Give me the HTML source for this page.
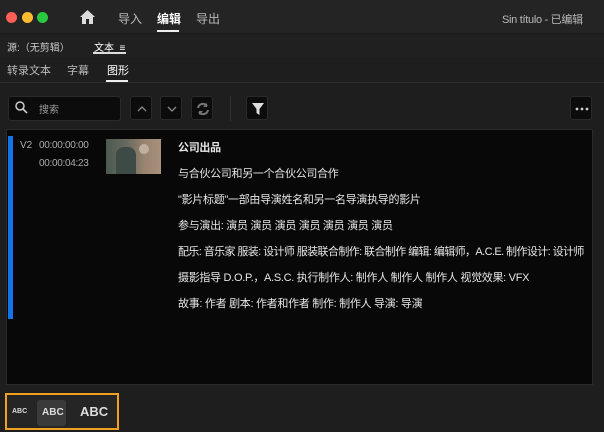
<!DOCTYPE html>
<html><head><meta charset="utf-8"><style>
*{margin:0;padding:0;box-sizing:border-box}
body{width:604px;height:432px;background:#1e1e1e;font-family:"Liberation Sans","Noto Sans CJK SC",sans-serif;color:#ccc;position:relative;overflow:hidden;font-size:11px}
.a{position:absolute}
.dot{width:11px;height:11px;border-radius:50%;top:12px}
.btn{background:#0c0c0c;border:1px solid #2a2a2a;border-radius:3px;width:22px;height:24px;top:96px}
.row{left:178px;color:#e6e6e6;font-size:11px;white-space:nowrap;letter-spacing:-0.3px}
</style></head><body>
<div class="a" style="left:0;top:0;width:604px;height:34px;background:#242424;border-bottom:1px solid #1a1a1a"></div>
<div class="a dot" style="left:6px;background:#fe5f57"></div>
<div class="a dot" style="left:22px;background:#febc2e"></div>
<div class="a dot" style="left:37px;background:#28c840"></div>
<svg class="a" style="left:80px;top:10px" width="15" height="14" viewBox="0 0 15 14"><path d="M7.5 0L0 7h2v7h4V9h3v5h4V7h2z" fill="#ddd"/></svg>
<div class="a" style="left:118px;top:10px;font-size:12px;color:#bbb">导入</div>
<div class="a" style="left:157px;top:10px;font-size:12px;color:#fff;font-weight:bold">编辑</div>
<div class="a" style="left:157px;top:30px;width:22px;height:2px;background:#eee"></div>
<div class="a" style="left:196px;top:10px;font-size:12px;color:#bbb">导出</div>
<div class="a" style="left:502px;top:11px;font-size:11px;color:#bbb;letter-spacing:-0.3px">Sin título - 已编辑</div>
<div class="a" style="left:0;top:35px;width:604px;height:22px;background:#202020"></div>
<div class="a" style="left:7px;top:39px;font-size:10px;color:#ccc">源:（无剪辑）</div>
<div class="a" style="left:94px;top:39px;font-size:10px;color:#fff">文本 &nbsp;≡</div>
<div class="a" style="left:93px;top:52px;width:33px;height:2px;background:#ddd"></div>
<div class="a" style="left:7px;top:62px;font-size:11px;color:#bbb">转录文本</div>
<div class="a" style="left:67px;top:62px;font-size:11px;color:#bbb">字幕</div>
<div class="a" style="left:107px;top:62px;font-size:11px;color:#fff">图形</div>
<div class="a" style="left:106px;top:80px;width:22px;height:2px;background:#eee"></div>
<div class="a" style="left:0;top:82px;width:604px;height:1px;background:#2e2e2e"></div>
<div class="a" style="left:8px;top:96px;width:113px;height:25px;background:#0c0c0c;border:1px solid #2a2a2a;border-radius:3px"></div>
<svg class="a" style="left:15px;top:101px" width="13" height="13" viewBox="0 0 13 13"><circle cx="5" cy="5" r="4" stroke="#ccc" stroke-width="1.5" fill="none"/><path d="M8 8l4 4" stroke="#ccc" stroke-width="1.6"/></svg>
<div class="a" style="left:39px;top:101px;font-size:10px;color:#999">搜索</div>
<div class="a btn" style="left:130px"><svg width="22" height="24"><path d="M7 14l4-4 4 4" stroke="#888" fill="none" stroke-width="1.3"/></svg></div>
<div class="a btn" style="left:160px"><svg width="22" height="24"><path d="M7 10l4 4 4-4" stroke="#888" fill="none" stroke-width="1.3"/></svg></div>
<div class="a btn" style="left:191px"><svg width="22" height="24"><path d="M6 11a5 5 0 0 1 9-2M16 13a5 5 0 0 1-9 2" stroke="#777" fill="none" stroke-width="2"/><path d="M15 6v4h-4M7 18v-4h4" fill="#777"/></svg></div>
<div class="a" style="left:230px;top:96px;width:1px;height:25px;background:#333"></div>
<div class="a btn" style="left:246px"><svg width="22" height="24"><path d="M5 6h12l-4.5 6v6l-3-2v-4z" fill="#ddd"/></svg></div>
<div class="a btn" style="left:570px;width:22px"><svg width="22" height="24"><circle cx="6" cy="12" r="1.4" fill="#ccc"/><circle cx="11" cy="12" r="1.4" fill="#ccc"/><circle cx="16" cy="12" r="1.4" fill="#ccc"/></svg></div>
<div class="a" style="left:6px;top:129px;width:587px;height:256px;background:#080808;border:1px solid #2a2a2a"></div>
<div class="a" style="left:8px;top:136px;width:5px;height:183px;background:#1473e6"></div>
<div class="a" style="left:20px;top:140px;font-size:10px;color:#aaa">V2</div>
<div class="a" style="left:39px;top:140px;font-size:10px;color:#aaa;letter-spacing:-0.3px">00:00:00:00</div>
<div class="a" style="left:39px;top:158px;font-size:10px;color:#aaa;letter-spacing:-0.3px">00:00:04:23</div>
<div class="a" style="left:106px;top:139px;width:55px;height:35px;background:linear-gradient(90deg,#4a5a50 0%,#6b6a60 40%,#9a8470 70%,#a8907a 100%)"><div style="position:absolute;left:10px;top:8px;width:20px;height:27px;background:#3d4a45;border-radius:8px 8px 0 0"></div><div style="position:absolute;left:33px;top:5px;width:10px;height:10px;background:#c0b0a0;border-radius:50%"></div></div>
<div class="a row" style="top:139px;font-weight:bold">公司出品</div>
<div class="a row" style="top:165px">与合伙公司和另一个合伙公司合作</div>
<div class="a row" style="top:191px">"影片标题"一部由导演姓名和另一名导演执导的影片</div>
<div class="a row" style="top:217px">参与演出: 演员 演员 演员 演员 演员 演员 演员</div>
<div class="a row" style="top:243px;letter-spacing:-0.6px">配乐: 音乐家 服装: 设计师 服装联合制作: 联合制作 编辑: 编辑师，A.C.E. 制作设计: 设计师</div>
<div class="a row" style="top:269px">摄影指导 D.O.P.，A.S.C. 执行制作人: 制作人 制作人 制作人 视觉效果: VFX</div>
<div class="a row" style="top:295px">故事: 作者 剧本: 作者和作者 制作: 制作人 导演: 导演</div>
<div class="a" style="left:5px;top:393px;width:114px;height:37px;border:2px solid #f0a020;background:#252525"></div>
<div class="a" style="left:12px;top:408px;font-size:7px;color:#ddd;font-weight:bold">ABC</div>
<div class="a" style="left:37px;top:400px;width:29px;height:26px;background:#3a3a3a;border-radius:3px"></div>
<div class="a" style="left:42px;top:407px;font-size:10px;color:#ddd;font-weight:bold">ABC</div>
<div class="a" style="left:80px;top:404px;font-size:13px;color:#ddd;font-weight:bold">ABC</div>
</body></html>
